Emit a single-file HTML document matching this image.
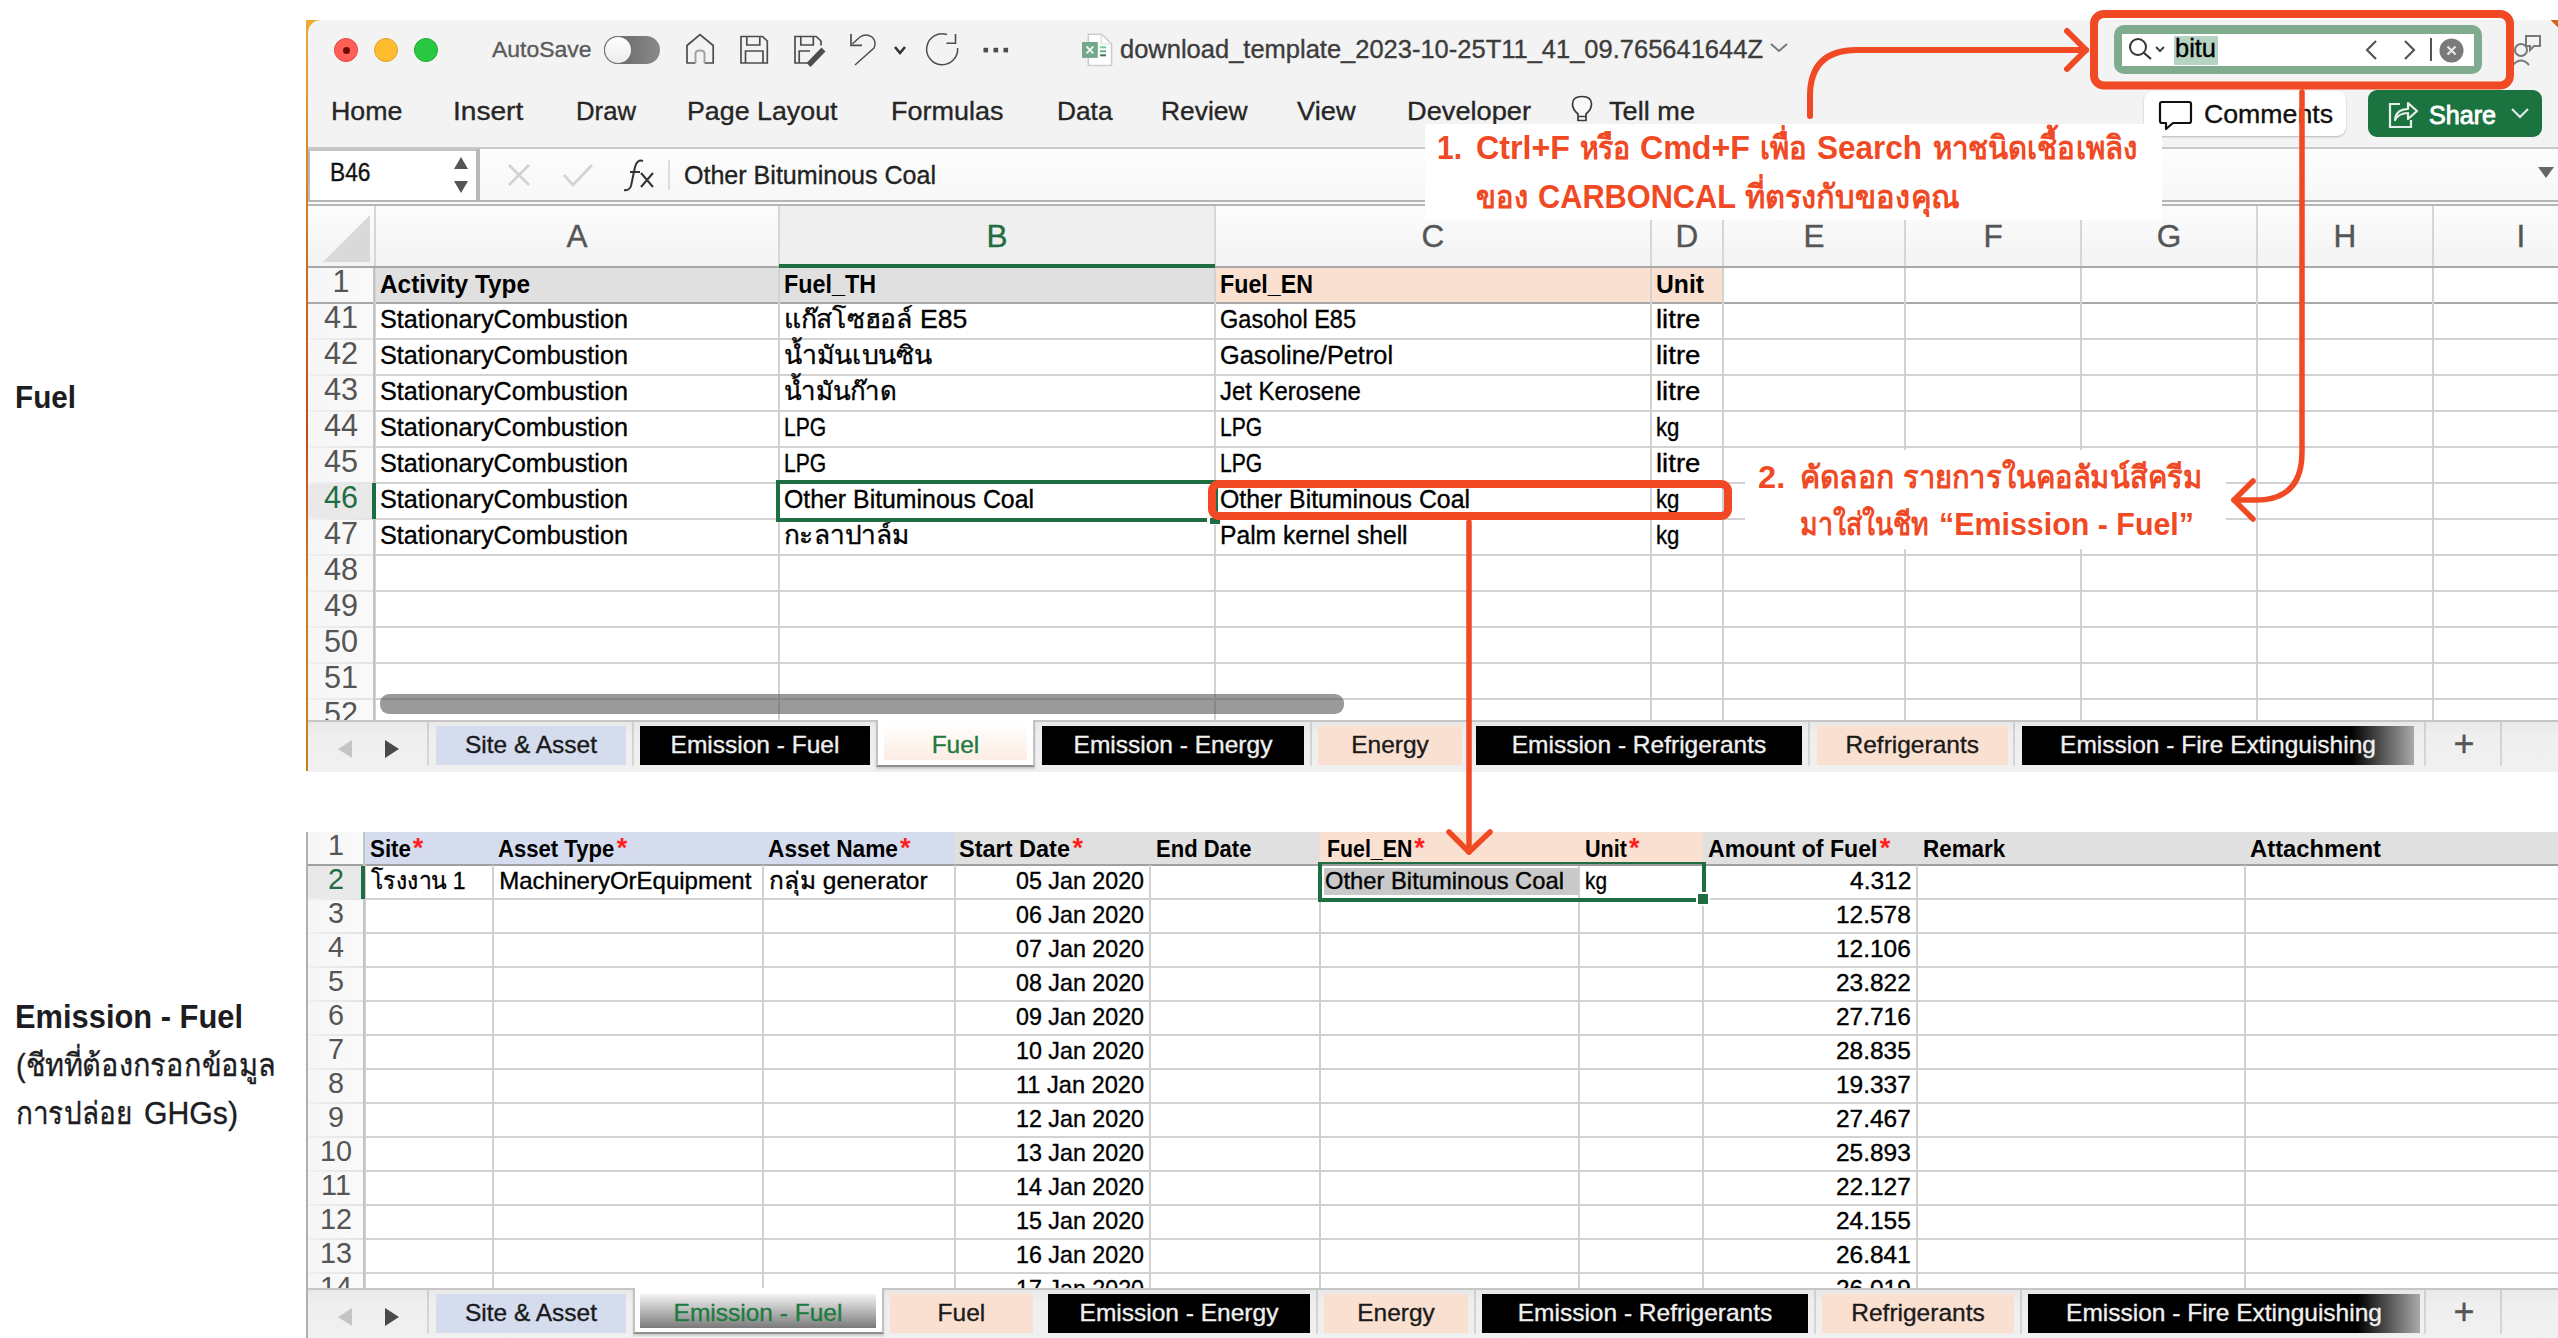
<!DOCTYPE html>
<html><head><meta charset="utf-8"><title>Excel fuel template</title>
<style>
html,body{margin:0;padding:0}
body{width:2558px;height:1338px;position:relative;overflow:hidden;background:#fff;font-family:'Liberation Sans', sans-serif}
</style></head><body>
<div style="position:absolute;left:15.00px;top:381.30px;font-size:32px;line-height:1;font-weight:bold;color:#1d1d1f;white-space:pre;transform:scaleX(0.9273);transform-origin:0 0;">Fuel</div>
<div style="position:absolute;left:15.00px;top:1000.45px;font-size:33px;line-height:1;font-weight:bold;color:#1d1d1f;white-space:pre;transform:scaleX(0.9349);transform-origin:0 0;">Emission - Fuel</div>
<div style="position:absolute;left:15.80px;top:1050.05px;font-size:31px;line-height:1;font-weight:normal;color:#1d1d1f;white-space:pre;transform:scaleX(0.9313);transform-origin:0 0;-webkit-text-stroke:0.35px #1d1d1f;width:281.3px;overflow-x:clip;overflow-y:visible;">(ชีทที่ต้องกรอกข้อมูล</div>
<div style="position:absolute;left:15.80px;top:1097.85px;font-size:31px;line-height:1;font-weight:normal;color:#1d1d1f;white-space:pre;transform:scaleX(0.8992);transform-origin:0 0;-webkit-text-stroke:0.35px #1d1d1f;width:132.0px;overflow-x:clip;overflow-y:visible;">การปล่อย</div>
<div style="position:absolute;left:144.00px;top:1097.85px;font-size:31px;line-height:1;font-weight:normal;color:#1d1d1f;white-space:pre;transform:scaleX(0.9747);transform-origin:0 0;-webkit-text-stroke:0.35px #1d1d1f;">GHGs)</div>
<div style="position:absolute;left:306px;top:20px;width:16px;height:751px;background:linear-gradient(#eeaa33,#c8621c 40%,#c44a1a 55%,#cf7a22 75%,#c8801e)"></div>
<div style="position:absolute;left:308px;top:20px;width:2250px;height:128px;background:#f3f3f3;border-top-left-radius:13px"></div>
<div style="position:absolute;left:2550px;top:20px;width:8px;height:8px;background:linear-gradient(225deg,#d8641e 50%,transparent 50%)"></div>
<div style="position:absolute;left:334px;top:38px;width:24px;height:24px;background:#ff5f57;border-radius:50%;box-sizing:border-box;border:1px solid #e2463f"></div>
<div style="position:absolute;left:374px;top:38px;width:24px;height:24px;background:#febc2e;border-radius:50%;box-sizing:border-box;border:1px solid #e0a028"></div>
<div style="position:absolute;left:414px;top:38px;width:24px;height:24px;background:#28c840;border-radius:50%;box-sizing:border-box;border:1px solid #1fa834"></div>
<div style="position:absolute;left:342.5px;top:46.5px;width:7px;height:7px;background:#6e0a08;border-radius:50%"></div>
<div style="position:absolute;left:492.00px;top:38.31px;font-size:22.7px;line-height:1;font-weight:normal;color:#5a5a5a;white-space:pre;transform:scaleX(1.0113);transform-origin:0 0;-webkit-text-stroke:0.35px #5a5a5a;">AutoSave</div>
<div style="position:absolute;left:604px;top:36px;width:56px;height:28px;background:linear-gradient(90deg,#5f5f5f,#8a8a8a);border-radius:14px"></div>
<div style="position:absolute;left:605px;top:37px;width:26px;height:26px;background:linear-gradient(#fff,#ececec);border-radius:50%;box-shadow:0 0 0 1px #777"></div>
<svg style="position:absolute;left:0px;top:0px;" width="1100" height="80" viewBox="0 0 1100 80">
<g fill="none" stroke="#4d4d4d" stroke-width="1.7" stroke-linejoin="miter">
<path d="M695.5 63 H687 V45.5 L700 34.5 L713.2 45.5 V63 H704.5"/>
<path d="M695.5 63 V53.5 Q695.5 50.5 700 50.5 Q704.5 50.5 704.5 53.5 V63" stroke="#a0a0a0" stroke-width="1.9"/>
<path d="M741 36.5 H762.5 L767.3 41 V63 H741 Z"/>
<path d="M746.8 36.5 V45 H759.8 V36.5"/>
<path d="M745.5 63 V51 H763 V63"/>
<path d="M808 63 H795 V36.5 H816.2 L821 41 V45.5"/>
<path d="M800.8 36.5 V45 H813.3 V36.5"/>
<path d="M799.2 63 V51 H810"/>
<path d="M851 34 V45.4 H862"/>
<path d="M852.5 43.8 L860 37 Q866 33 872 37 Q877 42 874 48 L855 65" stroke-width="1.5"/>
<path d="M947 34.5 A15.5 15.5 0 1 0 957.6 48" stroke-width="1.5"/>
<path d="M955.5 34 V43.3 H946.4" stroke-width="1.6"/>
</g>
<path d="M808.5 65 L823.5 49.5" stroke="#4d4d4d" stroke-width="5.5"/>
<path d="M895 47 L900 53 L905 47" fill="none" stroke="#333" stroke-width="2.6"/>
<rect x="983.5" y="47.8" width="4.6" height="4.6" fill="#4d4d4d"/>
<rect x="993.5" y="47.8" width="4.6" height="4.6" fill="#4d4d4d"/>
<rect x="1003.5" y="47.8" width="4.6" height="4.6" fill="#4d4d4d"/>
</svg>
<svg style="position:absolute;left:1078px;top:30px;" width="40" height="40" viewBox="0 0 40 40"><path d="M10.3 4.2 H23.8 L33.5 14 V35.5 H10.3 Z" fill="#fff" stroke="#cdcdcd" stroke-width="1.6"/><path d="M23.3 5 V14 H33" fill="none" stroke="#dedede" stroke-width="1.2"/><rect x="4" y="12" width="15.8" height="15.9" fill="#72a98a"/><path d="M8.5 16.5 L15.3 23.3 M15.3 16.5 L8.5 23.3" stroke="#eef5f0" stroke-width="1.8"/><rect x="22" y="16.3" width="6" height="2" fill="#6fcf9a"/><rect x="22" y="20.3" width="6" height="2" fill="#5fae82"/><rect x="22" y="24.3" width="6" height="2" fill="#4e6e5c"/></svg>
<div style="position:absolute;left:1120.00px;top:36.55px;font-size:25px;line-height:1;font-weight:normal;color:#3c3c3c;white-space:pre;transform:scaleX(1.0196);transform-origin:0 0;-webkit-text-stroke:0.35px #3c3c3c;">download_template_2023-10-25T11_41_09.765641644Z</div>
<svg style="position:absolute;left:1769px;top:42px;" width="20" height="12" viewBox="0 0 20 12"><path d="M2 2 L10 9 L18 2" fill="none" stroke="#777" stroke-width="2"/></svg>
<div style="position:absolute;left:2114px;top:25px;width:368px;height:49px;background:#80ab8f;border-radius:10px"></div>
<div style="position:absolute;left:2122px;top:34px;width:352px;height:32px;background:#fff"></div>
<svg style="position:absolute;left:2127px;top:36px;" width="46" height="26" viewBox="0 0 46 26"><circle cx="11" cy="11" r="8" fill="none" stroke="#333" stroke-width="2"/><path d="M17 17 L24 23" stroke="#333" stroke-width="2.2"/><path d="M29 11 L33 15 L37 11" fill="none" stroke="#444" stroke-width="2"/></svg>
<div style="position:absolute;left:2174px;top:36px;width:44px;height:29px;background:#b4d3c0"></div>
<div style="position:absolute;left:2175.00px;top:35.72px;font-size:25.5px;line-height:1;font-weight:normal;color:#000;white-space:pre;transform:scaleX(0.9970);transform-origin:0 0;-webkit-text-stroke:0.35px #000;">bitu</div>
<svg style="position:absolute;left:2362px;top:38px;" width="58" height="24" viewBox="0 0 58 24"><path d="M14 3 L5 12 L14 21 M43 3 L52 12 L43 21" fill="none" stroke="#555" stroke-width="2.2"/></svg>
<div style="position:absolute;left:2430px;top:38px;width:2px;height:23px;background:#555"></div>
<svg style="position:absolute;left:2439px;top:38px;" width="25" height="25" viewBox="0 0 25 25"><circle cx="12.5" cy="12.5" r="12" fill="#7a7a7a"/><path d="M8.5 8.5 L16.5 16.5 M16.5 8.5 L8.5 16.5" stroke="#e8e8e8" stroke-width="2.2"/></svg>
<svg style="position:absolute;left:2512px;top:32px;" width="30" height="36" viewBox="0 0 30 36"><circle cx="9" cy="18" r="6" fill="none" stroke="#777" stroke-width="2"/><path d="M1 33 Q9 24 17 33" fill="none" stroke="#777" stroke-width="2"/><path d="M14 4 H28 V14 H22 L18 18 V14 H14 Z" fill="none" stroke="#777" stroke-width="2"/></svg>
<div style="position:absolute;left:331.00px;top:97.60px;font-size:26px;line-height:1;font-weight:normal;color:#262626;white-space:pre;transform:scaleX(1.0294);transform-origin:0 0;-webkit-text-stroke:0.35px #262626;">Home</div>
<div style="position:absolute;left:452.50px;top:97.60px;font-size:26px;line-height:1;font-weight:normal;color:#262626;white-space:pre;transform:scaleX(1.0810);transform-origin:0 0;-webkit-text-stroke:0.35px #262626;">Insert</div>
<div style="position:absolute;left:576.00px;top:97.60px;font-size:26px;line-height:1;font-weight:normal;color:#262626;white-space:pre;transform:scaleX(0.9889);transform-origin:0 0;-webkit-text-stroke:0.35px #262626;">Draw</div>
<div style="position:absolute;left:687.00px;top:97.60px;font-size:26px;line-height:1;font-weight:normal;color:#262626;white-space:pre;transform:scaleX(1.0307);transform-origin:0 0;-webkit-text-stroke:0.35px #262626;">Page Layout</div>
<div style="position:absolute;left:890.60px;top:97.60px;font-size:26px;line-height:1;font-weight:normal;color:#262626;white-space:pre;transform:scaleX(1.0373);transform-origin:0 0;-webkit-text-stroke:0.35px #262626;">Formulas</div>
<div style="position:absolute;left:1057.00px;top:97.60px;font-size:26px;line-height:1;font-weight:normal;color:#262626;white-space:pre;transform:scaleX(1.0105);transform-origin:0 0;-webkit-text-stroke:0.35px #262626;">Data</div>
<div style="position:absolute;left:1161.00px;top:97.60px;font-size:26px;line-height:1;font-weight:normal;color:#262626;white-space:pre;transform:scaleX(1.0147);transform-origin:0 0;-webkit-text-stroke:0.35px #262626;">Review</div>
<div style="position:absolute;left:1297.00px;top:97.60px;font-size:26px;line-height:1;font-weight:normal;color:#262626;white-space:pre;transform:scaleX(1.0485);transform-origin:0 0;-webkit-text-stroke:0.35px #262626;">View</div>
<div style="position:absolute;left:1407.00px;top:97.60px;font-size:26px;line-height:1;font-weight:normal;color:#262626;white-space:pre;transform:scaleX(1.0463);transform-origin:0 0;-webkit-text-stroke:0.35px #262626;">Developer</div>
<div style="position:absolute;left:1609.00px;top:97.60px;font-size:26px;line-height:1;font-weight:normal;color:#262626;white-space:pre;transform:scaleX(1.0442);transform-origin:0 0;-webkit-text-stroke:0.35px #262626;">Tell me</div>
<svg style="position:absolute;left:1560px;top:90px;" width="40" height="40" viewBox="0 0 40 40"><path d="M18 30.5 V24 Q12.5 19.5 12.5 14 Q12.5 6.5 22 6.5 Q31.5 6.5 31.5 14 Q31.5 19.5 26 24 V30.5 Z" fill="#fafafa" stroke="#3a3a3a" stroke-width="1.7"/><path d="M18 26.5 H26" stroke="#3a3a3a" stroke-width="1.5"/></svg>
<div style="position:absolute;left:2144px;top:91px;width:202px;height:45px;background:#fff;border-radius:9px;box-shadow:0 1px 2px rgba(0,0,0,.25)"></div>
<svg style="position:absolute;left:2158px;top:99px;" width="36" height="32" viewBox="0 0 36 32"><path d="M4 3 H31 Q33 3 33 5 V22 Q33 24 31 24 H15 L8 30 V24 H4 Q2 24 2 22 V5 Q2 3 4 3 Z" fill="none" stroke="#111" stroke-width="2.2" stroke-linejoin="round"/></svg>
<div style="position:absolute;left:2204.00px;top:101.92px;font-size:25.5px;line-height:1;font-weight:normal;color:#111;white-space:pre;transform:scaleX(1.0464);transform-origin:0 0;-webkit-text-stroke:0.35px #111;">Comments</div>
<div style="position:absolute;left:2368px;top:90px;width:174px;height:47px;background:#1b7340;border-radius:9px"></div>
<svg style="position:absolute;left:2386px;top:98px;" width="34" height="32" viewBox="0 0 34 32"><path d="M14 6 H4 V29 H25 V22" fill="none" stroke="#e6efe9" stroke-width="2.2"/><path d="M9 22 Q10 11 22 11 V5 L31 13 L22 21 V15 Q13 15 9 22 Z" fill="none" stroke="#e6efe9" stroke-width="2.2" stroke-linejoin="round"/></svg>
<div style="position:absolute;left:2429.00px;top:101.50px;font-size:26px;line-height:1;font-weight:normal;color:#fff;white-space:pre;transform:scaleX(0.9655);transform-origin:0 0;-webkit-text-stroke:0.9px #fff;">Share</div>
<svg style="position:absolute;left:2510px;top:106px;" width="20" height="14" viewBox="0 0 20 14"><path d="M2 3 L10 11 L18 3" fill="none" stroke="#e6efe9" stroke-width="2"/></svg>
<div style="position:absolute;left:308px;top:147px;width:2250px;height:2px;background:#c9c9c9"></div>
<div style="position:absolute;left:308px;top:149px;width:2250px;height:52px;background:linear-gradient(#fdfdfd,#f7f7f7)"></div>
<div style="position:absolute;left:308px;top:149px;width:170px;height:51px;background:#fff;box-sizing:border-box;border-left:2px solid #b8b8b8;border-top:2px solid #c4c4c4"></div>
<div style="position:absolute;left:476px;top:149px;width:4px;height:52px;background:#b9b9b9"></div>
<div style="position:absolute;left:308px;top:200px;width:2250px;height:2px;background:#b5b5b5"></div>
<div style="position:absolute;left:308px;top:202px;width:2250px;height:2px;background:#fafafa"></div>
<div style="position:absolute;left:308px;top:204px;width:2250px;height:2px;background:#b5b5b5"></div>
<div style="position:absolute;left:329.50px;top:160.06px;font-size:25.7px;line-height:1;font-weight:normal;color:#111;white-space:pre;transform:scaleX(0.8859);transform-origin:0 0;-webkit-text-stroke:0.35px #111;">B46</div>
<svg style="position:absolute;left:452px;top:155px;" width="18" height="40" viewBox="0 0 18 40"><path d="M2 14 L9 2 L16 14 Z M2 26 L9 38 L16 26 Z" fill="#555"/></svg>
<svg style="position:absolute;left:506px;top:162px;" width="26" height="26" viewBox="0 0 26 26"><path d="M3 3 L23 23 M23 3 L3 23" stroke="#d2d2d2" stroke-width="2.6"/></svg>
<svg style="position:absolute;left:562px;top:162px;" width="32" height="26" viewBox="0 0 32 26"><path d="M2 13 L11 23 L30 3" fill="none" stroke="#d2d2d2" stroke-width="2.6"/></svg>
<svg style="position:absolute;left:622px;top:158px;" width="36" height="34" viewBox="0 0 36 34"><path d="M21 3 Q15 1 13 9 L9 28 Q7 33 2 32 M8 14 H18" fill="none" stroke="#333" stroke-width="2"/><path d="M19 15 L31 29 M31 15 L19 29" stroke="#333" stroke-width="2"/></svg>
<div style="position:absolute;left:668px;top:160px;width:2px;height:30px;background:#dcdcdc"></div>
<div style="position:absolute;left:684.00px;top:161.90px;font-size:26px;line-height:1;font-weight:normal;color:#222;white-space:pre;transform:scaleX(0.9634);transform-origin:0 0;-webkit-text-stroke:0.35px #222;">Other Bituminous Coal</div>
<svg style="position:absolute;left:2536px;top:164px;" width="20" height="16" viewBox="0 0 20 16"><path d="M2 3 H18 L10 14 Z" fill="#666"/></svg>
<div style="position:absolute;left:308px;top:206px;width:2250px;height:61px;background:linear-gradient(#fcfcfc,#f3f3f3)"></div>
<div style="position:absolute;left:779px;top:206px;width:436px;height:58px;background:#efefef"></div>
<div style="position:absolute;left:374px;top:206px;width:2px;height:61px;background:#d6d6d6"></div>
<div style="position:absolute;left:778px;top:206px;width:2px;height:61px;background:#d6d6d6"></div>
<div style="position:absolute;left:1214px;top:206px;width:2px;height:61px;background:#d6d6d6"></div>
<div style="position:absolute;left:1650px;top:206px;width:2px;height:61px;background:#d6d6d6"></div>
<div style="position:absolute;left:1722px;top:206px;width:2px;height:61px;background:#d6d6d6"></div>
<div style="position:absolute;left:1904px;top:206px;width:2px;height:61px;background:#d6d6d6"></div>
<div style="position:absolute;left:2080px;top:206px;width:2px;height:61px;background:#d6d6d6"></div>
<div style="position:absolute;left:2256px;top:206px;width:2px;height:61px;background:#d6d6d6"></div>
<div style="position:absolute;left:2432px;top:206px;width:2px;height:61px;background:#d6d6d6"></div>
<svg style="position:absolute;left:320px;top:212px;" width="54" height="52" viewBox="0 0 54 52"><path d="M3 50 L50 3 V50 Z" fill="#d9d9d9"/></svg>
<div style="position:absolute;left:566.49px;top:221.22px;font-size:31.5px;line-height:1;font-weight:normal;color:#555;white-space:pre;-webkit-text-stroke:0.35px #555;">A</div>
<div style="position:absolute;left:986.49px;top:221.22px;font-size:31.5px;line-height:1;font-weight:normal;color:#1f6e43;white-space:pre;-webkit-text-stroke:0.35px #1f6e43;">B</div>
<div style="position:absolute;left:1421.62px;top:221.22px;font-size:31.5px;line-height:1;font-weight:normal;color:#555;white-space:pre;-webkit-text-stroke:0.35px #555;">C</div>
<div style="position:absolute;left:1675.62px;top:221.22px;font-size:31.5px;line-height:1;font-weight:normal;color:#555;white-space:pre;-webkit-text-stroke:0.35px #555;">D</div>
<div style="position:absolute;left:1803.49px;top:221.22px;font-size:31.5px;line-height:1;font-weight:normal;color:#555;white-space:pre;-webkit-text-stroke:0.35px #555;">E</div>
<div style="position:absolute;left:1983.38px;top:221.22px;font-size:31.5px;line-height:1;font-weight:normal;color:#555;white-space:pre;-webkit-text-stroke:0.35px #555;">F</div>
<div style="position:absolute;left:2156.74px;top:221.22px;font-size:31.5px;line-height:1;font-weight:normal;color:#555;white-space:pre;-webkit-text-stroke:0.35px #555;">G</div>
<div style="position:absolute;left:2333.62px;top:221.22px;font-size:31.5px;line-height:1;font-weight:normal;color:#555;white-space:pre;-webkit-text-stroke:0.35px #555;">H</div>
<div style="position:absolute;left:2516.62px;top:221.22px;font-size:31.5px;line-height:1;font-weight:normal;color:#555;white-space:pre;-webkit-text-stroke:0.35px #555;">I</div>
<div style="position:absolute;left:308px;top:266px;width:2250px;height:2px;background:#a9a9a9"></div>
<div style="position:absolute;left:779px;top:264px;width:436px;height:4px;background:#1f6e43"></div>
<div style="position:absolute;left:308px;top:268px;width:2250px;height:452px;background:#fff"></div>
<div style="position:absolute;left:308px;top:268px;width:67px;height:452px;background:linear-gradient(90deg,#f6f6f6,#fafafa)"></div>
<div style="position:absolute;left:375px;top:268px;width:840px;height:35px;background:#e0e0e0"></div>
<div style="position:absolute;left:1215px;top:268px;width:508px;height:35px;background:#fae0d1"></div>
<div style="position:absolute;left:308px;top:483px;width:67px;height:36px;background:#e9e9e9"></div>
<div style="position:absolute;left:308px;top:302px;width:2250px;height:2px;background:#a8a8a8"></div>
<div style="position:absolute;left:308px;top:338px;width:67px;height:2px;background:linear-gradient(90deg,#f0f0f0,#e2e2e2)"></div>
<div style="position:absolute;left:375px;top:338px;width:2183px;height:2px;background:#d2d2d2"></div>
<div style="position:absolute;left:308px;top:374px;width:67px;height:2px;background:linear-gradient(90deg,#f0f0f0,#e2e2e2)"></div>
<div style="position:absolute;left:375px;top:374px;width:2183px;height:2px;background:#d2d2d2"></div>
<div style="position:absolute;left:308px;top:410px;width:67px;height:2px;background:linear-gradient(90deg,#f0f0f0,#e2e2e2)"></div>
<div style="position:absolute;left:375px;top:410px;width:2183px;height:2px;background:#d2d2d2"></div>
<div style="position:absolute;left:308px;top:446px;width:67px;height:2px;background:linear-gradient(90deg,#f0f0f0,#e2e2e2)"></div>
<div style="position:absolute;left:375px;top:446px;width:2183px;height:2px;background:#d2d2d2"></div>
<div style="position:absolute;left:308px;top:482px;width:67px;height:2px;background:linear-gradient(90deg,#f0f0f0,#e2e2e2)"></div>
<div style="position:absolute;left:375px;top:482px;width:2183px;height:2px;background:#d2d2d2"></div>
<div style="position:absolute;left:308px;top:518px;width:67px;height:2px;background:linear-gradient(90deg,#f0f0f0,#e2e2e2)"></div>
<div style="position:absolute;left:375px;top:518px;width:2183px;height:2px;background:#d2d2d2"></div>
<div style="position:absolute;left:308px;top:554px;width:67px;height:2px;background:linear-gradient(90deg,#f0f0f0,#e2e2e2)"></div>
<div style="position:absolute;left:375px;top:554px;width:2183px;height:2px;background:#d2d2d2"></div>
<div style="position:absolute;left:308px;top:590px;width:67px;height:2px;background:linear-gradient(90deg,#f0f0f0,#e2e2e2)"></div>
<div style="position:absolute;left:375px;top:590px;width:2183px;height:2px;background:#d2d2d2"></div>
<div style="position:absolute;left:308px;top:626px;width:67px;height:2px;background:linear-gradient(90deg,#f0f0f0,#e2e2e2)"></div>
<div style="position:absolute;left:375px;top:626px;width:2183px;height:2px;background:#d2d2d2"></div>
<div style="position:absolute;left:308px;top:662px;width:67px;height:2px;background:linear-gradient(90deg,#f0f0f0,#e2e2e2)"></div>
<div style="position:absolute;left:375px;top:662px;width:2183px;height:2px;background:#d2d2d2"></div>
<div style="position:absolute;left:308px;top:698px;width:67px;height:2px;background:linear-gradient(90deg,#f0f0f0,#e2e2e2)"></div>
<div style="position:absolute;left:375px;top:698px;width:2183px;height:2px;background:#d2d2d2"></div>
<div style="position:absolute;left:374px;top:268px;width:2px;height:452px;background:#d2d2d2"></div>
<div style="position:absolute;left:778px;top:268px;width:2px;height:452px;background:#d2d2d2"></div>
<div style="position:absolute;left:1214px;top:268px;width:2px;height:452px;background:#d2d2d2"></div>
<div style="position:absolute;left:1650px;top:268px;width:2px;height:452px;background:#d2d2d2"></div>
<div style="position:absolute;left:1722px;top:268px;width:2px;height:452px;background:#d2d2d2"></div>
<div style="position:absolute;left:1904px;top:268px;width:2px;height:452px;background:#d2d2d2"></div>
<div style="position:absolute;left:2080px;top:268px;width:2px;height:452px;background:#d2d2d2"></div>
<div style="position:absolute;left:2256px;top:268px;width:2px;height:452px;background:#d2d2d2"></div>
<div style="position:absolute;left:2432px;top:268px;width:2px;height:452px;background:#d2d2d2"></div>
<div style="position:absolute;left:373px;top:268px;width:2px;height:452px;background:#c4c4c4"></div>
<div style="position:absolute;left:332.49px;top:265.89px;font-size:30.6px;line-height:1;font-weight:normal;color:#555;white-space:pre;">1</div>
<div style="position:absolute;left:323.98px;top:301.89px;font-size:30.6px;line-height:1;font-weight:normal;color:#555;white-space:pre;">41</div>
<div style="position:absolute;left:323.98px;top:337.89px;font-size:30.6px;line-height:1;font-weight:normal;color:#555;white-space:pre;">42</div>
<div style="position:absolute;left:323.98px;top:373.89px;font-size:30.6px;line-height:1;font-weight:normal;color:#555;white-space:pre;">43</div>
<div style="position:absolute;left:323.98px;top:409.89px;font-size:30.6px;line-height:1;font-weight:normal;color:#555;white-space:pre;">44</div>
<div style="position:absolute;left:323.98px;top:445.89px;font-size:30.6px;line-height:1;font-weight:normal;color:#555;white-space:pre;">45</div>
<div style="position:absolute;left:323.98px;top:481.89px;font-size:30.6px;line-height:1;font-weight:normal;color:#1f6e43;white-space:pre;">46</div>
<div style="position:absolute;left:323.98px;top:517.89px;font-size:30.6px;line-height:1;font-weight:normal;color:#555;white-space:pre;">47</div>
<div style="position:absolute;left:323.98px;top:553.89px;font-size:30.6px;line-height:1;font-weight:normal;color:#555;white-space:pre;">48</div>
<div style="position:absolute;left:323.98px;top:589.89px;font-size:30.6px;line-height:1;font-weight:normal;color:#555;white-space:pre;">49</div>
<div style="position:absolute;left:323.98px;top:625.89px;font-size:30.6px;line-height:1;font-weight:normal;color:#555;white-space:pre;">50</div>
<div style="position:absolute;left:323.98px;top:661.89px;font-size:30.6px;line-height:1;font-weight:normal;color:#555;white-space:pre;">51</div>
<div style="position:absolute;left:323.98px;top:697.89px;font-size:30.6px;line-height:1;font-weight:normal;color:#555;white-space:pre;">52</div>
<div style="position:absolute;left:372px;top:483px;width:4px;height:36px;background:#1f6e43"></div>
<div style="position:absolute;left:380.00px;top:272.41px;font-size:25.4px;line-height:1;font-weight:bold;color:#000;white-space:pre;transform:scaleX(0.9606);transform-origin:0 0;">Activity Type</div>
<div style="position:absolute;left:784.00px;top:272.41px;font-size:25.4px;line-height:1;font-weight:bold;color:#000;white-space:pre;transform:scaleX(0.9184);transform-origin:0 0;">Fuel_TH</div>
<div style="position:absolute;left:1220.00px;top:272.41px;font-size:25.4px;line-height:1;font-weight:bold;color:#000;white-space:pre;transform:scaleX(0.9154);transform-origin:0 0;">Fuel_EN</div>
<div style="position:absolute;left:1656.00px;top:272.41px;font-size:25.4px;line-height:1;font-weight:bold;color:#000;white-space:pre;transform:scaleX(0.9725);transform-origin:0 0;">Unit</div>
<div style="position:absolute;left:380.00px;top:306.61px;font-size:25.4px;line-height:1;font-weight:normal;color:#000;white-space:pre;transform:scaleX(0.9927);transform-origin:0 0;-webkit-text-stroke:0.35px #000;">StationaryCombustion</div>
<div style="position:absolute;left:784.00px;top:306.61px;font-size:25.4px;line-height:1;font-weight:normal;color:#000;white-space:pre;transform:scaleX(1.0466);transform-origin:0 0;-webkit-text-stroke:0.35px #000;width:178.2px;overflow-x:clip;overflow-y:visible;">แก๊สโซฮอล์ E85</div>
<div style="position:absolute;left:1220.00px;top:306.61px;font-size:25.4px;line-height:1;font-weight:normal;color:#000;white-space:pre;transform:scaleX(0.9264);transform-origin:0 0;-webkit-text-stroke:0.35px #000;">Gasohol E85</div>
<div style="position:absolute;left:1656.00px;top:306.61px;font-size:25.4px;line-height:1;font-weight:normal;color:#000;white-space:pre;transform:scaleX(1.0850);transform-origin:0 0;-webkit-text-stroke:0.35px #000;">litre</div>
<div style="position:absolute;left:380.00px;top:342.61px;font-size:25.4px;line-height:1;font-weight:normal;color:#000;white-space:pre;transform:scaleX(0.9927);transform-origin:0 0;-webkit-text-stroke:0.35px #000;">StationaryCombustion</div>
<div style="position:absolute;left:784.00px;top:342.61px;font-size:25.4px;line-height:1;font-weight:normal;color:#000;white-space:pre;transform:scaleX(1.0496);transform-origin:0 0;-webkit-text-stroke:0.35px #000;width:144.0px;overflow-x:clip;overflow-y:visible;">น้ำมันเบนซิน</div>
<div style="position:absolute;left:1220.00px;top:342.61px;font-size:25.4px;line-height:1;font-weight:normal;color:#000;white-space:pre;transform:scaleX(0.9966);transform-origin:0 0;-webkit-text-stroke:0.35px #000;">Gasoline/Petrol</div>
<div style="position:absolute;left:1656.00px;top:342.61px;font-size:25.4px;line-height:1;font-weight:normal;color:#000;white-space:pre;transform:scaleX(1.0850);transform-origin:0 0;-webkit-text-stroke:0.35px #000;">litre</div>
<div style="position:absolute;left:380.00px;top:378.61px;font-size:25.4px;line-height:1;font-weight:normal;color:#000;white-space:pre;transform:scaleX(0.9927);transform-origin:0 0;-webkit-text-stroke:0.35px #000;">StationaryCombustion</div>
<div style="position:absolute;left:784.00px;top:378.61px;font-size:25.4px;line-height:1;font-weight:normal;color:#000;white-space:pre;transform:scaleX(1.0182);transform-origin:0 0;-webkit-text-stroke:0.35px #000;width:113.0px;overflow-x:clip;overflow-y:visible;">น้ำมันก๊าด</div>
<div style="position:absolute;left:1220.00px;top:378.61px;font-size:25.4px;line-height:1;font-weight:normal;color:#000;white-space:pre;transform:scaleX(0.9404);transform-origin:0 0;-webkit-text-stroke:0.35px #000;">Jet Kerosene</div>
<div style="position:absolute;left:1656.00px;top:378.61px;font-size:25.4px;line-height:1;font-weight:normal;color:#000;white-space:pre;transform:scaleX(1.0850);transform-origin:0 0;-webkit-text-stroke:0.35px #000;">litre</div>
<div style="position:absolute;left:380.00px;top:414.61px;font-size:25.4px;line-height:1;font-weight:normal;color:#000;white-space:pre;transform:scaleX(0.9927);transform-origin:0 0;-webkit-text-stroke:0.35px #000;">StationaryCombustion</div>
<div style="position:absolute;left:784.00px;top:414.61px;font-size:25.4px;line-height:1;font-weight:normal;color:#000;white-space:pre;transform:scaleX(0.8325);transform-origin:0 0;-webkit-text-stroke:0.35px #000;">LPG</div>
<div style="position:absolute;left:1220.00px;top:414.61px;font-size:25.4px;line-height:1;font-weight:normal;color:#000;white-space:pre;transform:scaleX(0.8325);transform-origin:0 0;-webkit-text-stroke:0.35px #000;">LPG</div>
<div style="position:absolute;left:1656.00px;top:414.61px;font-size:25.4px;line-height:1;font-weight:normal;color:#000;white-space:pre;transform:scaleX(0.8759);transform-origin:0 0;-webkit-text-stroke:0.35px #000;">kg</div>
<div style="position:absolute;left:380.00px;top:450.61px;font-size:25.4px;line-height:1;font-weight:normal;color:#000;white-space:pre;transform:scaleX(0.9927);transform-origin:0 0;-webkit-text-stroke:0.35px #000;">StationaryCombustion</div>
<div style="position:absolute;left:784.00px;top:450.61px;font-size:25.4px;line-height:1;font-weight:normal;color:#000;white-space:pre;transform:scaleX(0.8325);transform-origin:0 0;-webkit-text-stroke:0.35px #000;">LPG</div>
<div style="position:absolute;left:1220.00px;top:450.61px;font-size:25.4px;line-height:1;font-weight:normal;color:#000;white-space:pre;transform:scaleX(0.8325);transform-origin:0 0;-webkit-text-stroke:0.35px #000;">LPG</div>
<div style="position:absolute;left:1656.00px;top:450.61px;font-size:25.4px;line-height:1;font-weight:normal;color:#000;white-space:pre;transform:scaleX(1.0850);transform-origin:0 0;-webkit-text-stroke:0.35px #000;">litre</div>
<div style="position:absolute;left:380.00px;top:486.61px;font-size:25.4px;line-height:1;font-weight:normal;color:#000;white-space:pre;transform:scaleX(0.9927);transform-origin:0 0;-webkit-text-stroke:0.35px #000;">StationaryCombustion</div>
<div style="position:absolute;left:784.00px;top:486.61px;font-size:25.4px;line-height:1;font-weight:normal;color:#000;white-space:pre;transform:scaleX(0.9787);transform-origin:0 0;-webkit-text-stroke:0.35px #000;">Other Bituminous Coal</div>
<div style="position:absolute;left:1220.00px;top:486.61px;font-size:25.4px;line-height:1;font-weight:normal;color:#000;white-space:pre;transform:scaleX(0.9787);transform-origin:0 0;-webkit-text-stroke:0.35px #000;">Other Bituminous Coal</div>
<div style="position:absolute;left:1656.00px;top:486.61px;font-size:25.4px;line-height:1;font-weight:normal;color:#000;white-space:pre;transform:scaleX(0.8759);transform-origin:0 0;-webkit-text-stroke:0.35px #000;">kg</div>
<div style="position:absolute;left:380.00px;top:522.61px;font-size:25.4px;line-height:1;font-weight:normal;color:#000;white-space:pre;transform:scaleX(0.9927);transform-origin:0 0;-webkit-text-stroke:0.35px #000;">StationaryCombustion</div>
<div style="position:absolute;left:784.00px;top:522.61px;font-size:25.4px;line-height:1;font-weight:normal;color:#000;white-space:pre;transform:scaleX(1.0328);transform-origin:0 0;-webkit-text-stroke:0.35px #000;width:125.0px;overflow-x:clip;overflow-y:visible;">กะลาปาล์ม</div>
<div style="position:absolute;left:1220.00px;top:522.61px;font-size:25.4px;line-height:1;font-weight:normal;color:#000;white-space:pre;transform:scaleX(0.9703);transform-origin:0 0;-webkit-text-stroke:0.35px #000;">Palm kernel shell</div>
<div style="position:absolute;left:1656.00px;top:522.61px;font-size:25.4px;line-height:1;font-weight:normal;color:#000;white-space:pre;transform:scaleX(0.8759);transform-origin:0 0;-webkit-text-stroke:0.35px #000;">kg</div>
<div style="position:absolute;left:776px;top:480px;width:442px;height:42px;box-sizing:border-box;border:4px solid #1f6e43"></div>
<div style="position:absolute;left:1207px;top:517px;width:14px;height:8px;background:#fff"></div>
<div style="position:absolute;left:1210px;top:518px;width:10px;height:6px;background:#1f6e43"></div>
<div style="position:absolute;left:380px;top:694px;width:964px;height:20px;background:rgba(87,87,87,.6);border-radius:9px"></div>
<div style="position:absolute;left:308px;top:720px;width:2250px;height:52px;background:linear-gradient(#e7e7e7,#efefef 30%,#f0f0f0)"></div>
<div style="position:absolute;left:308px;top:720px;width:2250px;height:2px;background:#c6c6c6"></div>
<svg style="position:absolute;left:336px;top:739px;" width="18" height="20" viewBox="0 0 18 20"><path d="M16 1 L2 10 L16 19 Z" fill="#c4c4c4"/></svg>
<svg style="position:absolute;left:383px;top:739px;" width="18" height="20" viewBox="0 0 18 20"><path d="M2 1 L16 10 L2 19 Z" fill="#4a4a4a"/></svg>
<div style="position:absolute;left:427px;top:722px;width:2px;height:44px;background:linear-gradient(#cfcfcf,#d8d8d8)"></div>
<div style="position:absolute;left:632px;top:722px;width:2px;height:44px;background:linear-gradient(#cfcfcf,#d8d8d8)"></div>
<div style="position:absolute;left:1309.6px;top:722px;width:2px;height:44px;background:linear-gradient(#cfcfcf,#d8d8d8)"></div>
<div style="position:absolute;left:1466.6px;top:722px;width:2px;height:44px;background:linear-gradient(#cfcfcf,#d8d8d8)"></div>
<div style="position:absolute;left:1807.7px;top:722px;width:2px;height:44px;background:linear-gradient(#cfcfcf,#d8d8d8)"></div>
<div style="position:absolute;left:2013.4px;top:722px;width:2px;height:44px;background:linear-gradient(#cfcfcf,#d8d8d8)"></div>
<div style="position:absolute;left:2424px;top:722px;width:2px;height:44px;background:linear-gradient(#cfcfcf,#d8d8d8)"></div>
<div style="position:absolute;left:2500px;top:722px;width:2px;height:44px;background:linear-gradient(#cfcfcf,#d8d8d8)"></div>
<div style="position:absolute;left:436px;top:726px;width:190px;height:39px;background:#d4dcee"></div>
<div style="position:absolute;left:464.95px;top:732.77px;font-size:24.5px;line-height:1;font-weight:normal;color:#1a1a1a;white-space:pre;-webkit-text-stroke:0.35px #1a1a1a;">Site &amp; Asset</div>
<div style="position:absolute;left:640px;top:726px;width:230px;height:39px;background:#000"></div>
<div style="position:absolute;left:670.59px;top:732.77px;font-size:24.5px;line-height:1;font-weight:normal;color:#f0f0f0;white-space:pre;-webkit-text-stroke:0.35px #f0f0f0;">Emission - Fuel</div>
<div style="position:absolute;left:876px;top:720px;width:159px;height:46.5px;box-sizing:border-box;background:#fff;border:2px solid #c2c2c2;border-top:0;border-bottom:2.5px solid #8e8e8e;box-shadow:0 2px 2px rgba(0,0,0,.15)"></div>
<div style="position:absolute;left:884px;top:726px;width:143px;height:34px;background:linear-gradient(#fffdfc,#fcede4)"></div>
<div style="position:absolute;left:931.66px;top:732.77px;font-size:24.5px;line-height:1;font-weight:normal;color:#1e7b3e;white-space:pre;-webkit-text-stroke:0.35px #1e7b3e;">Fuel</div>
<div style="position:absolute;left:1042px;top:726px;width:262px;height:39px;background:#000"></div>
<div style="position:absolute;left:1073.60px;top:732.77px;font-size:24.5px;line-height:1;font-weight:normal;color:#f0f0f0;white-space:pre;-webkit-text-stroke:0.35px #f0f0f0;">Emission - Energy</div>
<div style="position:absolute;left:1318px;top:726px;width:144px;height:39px;background:#fae0d1"></div>
<div style="position:absolute;left:1351.18px;top:732.77px;font-size:24.5px;line-height:1;font-weight:normal;color:#1a1a1a;white-space:pre;-webkit-text-stroke:0.35px #1a1a1a;">Energy</div>
<div style="position:absolute;left:1476px;top:726px;width:326px;height:39px;background:#000"></div>
<div style="position:absolute;left:1511.70px;top:732.77px;font-size:24.5px;line-height:1;font-weight:normal;color:#f0f0f0;white-space:pre;-webkit-text-stroke:0.35px #f0f0f0;">Emission - Refrigerants</div>
<div style="position:absolute;left:1816.5px;top:726px;width:191.5px;height:39px;background:#fae0d1"></div>
<div style="position:absolute;left:1845.52px;top:732.77px;font-size:24.5px;line-height:1;font-weight:normal;color:#1a1a1a;white-space:pre;-webkit-text-stroke:0.35px #1a1a1a;">Refrigerants</div>
<div style="position:absolute;left:2022px;top:726px;width:392px;height:39px;background:linear-gradient(90deg,#000 0,#000 84%,#aaa 100%)"></div>
<div style="position:absolute;left:2060.05px;top:732.77px;font-size:24.5px;line-height:1;font-weight:normal;color:#f0f0f0;white-space:pre;-webkit-text-stroke:0.35px #f0f0f0;">Emission - Fire Extinguishing</div>
<div style="position:absolute;left:2453.48px;top:725.90px;font-size:36px;line-height:1;font-weight:normal;color:#555;white-space:pre;-webkit-text-stroke:0.35px #555;">+</div>
<div style="position:absolute;left:306px;top:832px;width:2px;height:506px;background:#b0b0b0"></div>
<div style="position:absolute;left:308px;top:832px;width:2250px;height:456px;background:#fff"></div>
<div style="position:absolute;left:308px;top:832px;width:57px;height:456px;background:linear-gradient(90deg,#f6f6f6,#fafafa)"></div>
<div style="position:absolute;left:365px;top:832px;width:590px;height:33px;background:#d4dcee"></div>
<div style="position:absolute;left:955px;top:832px;width:365px;height:33px;background:#e0e0e0"></div>
<div style="position:absolute;left:1320px;top:832px;width:383px;height:33px;background:#fae0d1"></div>
<div style="position:absolute;left:1703px;top:832px;width:855px;height:33px;background:#e0e0e0"></div>
<div style="position:absolute;left:308px;top:866px;width:57px;height:33px;background:#e9e9e9"></div>
<div style="position:absolute;left:308px;top:864px;width:2250px;height:2px;background:#a0a0a0"></div>
<div style="position:absolute;left:308px;top:898px;width:57px;height:2px;background:linear-gradient(90deg,#f0f0f0,#e2e2e2)"></div>
<div style="position:absolute;left:365px;top:898px;width:2193px;height:2px;background:#d2d2d2"></div>
<div style="position:absolute;left:308px;top:932px;width:57px;height:2px;background:linear-gradient(90deg,#f0f0f0,#e2e2e2)"></div>
<div style="position:absolute;left:365px;top:932px;width:2193px;height:2px;background:#d2d2d2"></div>
<div style="position:absolute;left:308px;top:966px;width:57px;height:2px;background:linear-gradient(90deg,#f0f0f0,#e2e2e2)"></div>
<div style="position:absolute;left:365px;top:966px;width:2193px;height:2px;background:#d2d2d2"></div>
<div style="position:absolute;left:308px;top:1000px;width:57px;height:2px;background:linear-gradient(90deg,#f0f0f0,#e2e2e2)"></div>
<div style="position:absolute;left:365px;top:1000px;width:2193px;height:2px;background:#d2d2d2"></div>
<div style="position:absolute;left:308px;top:1034px;width:57px;height:2px;background:linear-gradient(90deg,#f0f0f0,#e2e2e2)"></div>
<div style="position:absolute;left:365px;top:1034px;width:2193px;height:2px;background:#d2d2d2"></div>
<div style="position:absolute;left:308px;top:1068px;width:57px;height:2px;background:linear-gradient(90deg,#f0f0f0,#e2e2e2)"></div>
<div style="position:absolute;left:365px;top:1068px;width:2193px;height:2px;background:#d2d2d2"></div>
<div style="position:absolute;left:308px;top:1102px;width:57px;height:2px;background:linear-gradient(90deg,#f0f0f0,#e2e2e2)"></div>
<div style="position:absolute;left:365px;top:1102px;width:2193px;height:2px;background:#d2d2d2"></div>
<div style="position:absolute;left:308px;top:1136px;width:57px;height:2px;background:linear-gradient(90deg,#f0f0f0,#e2e2e2)"></div>
<div style="position:absolute;left:365px;top:1136px;width:2193px;height:2px;background:#d2d2d2"></div>
<div style="position:absolute;left:308px;top:1170px;width:57px;height:2px;background:linear-gradient(90deg,#f0f0f0,#e2e2e2)"></div>
<div style="position:absolute;left:365px;top:1170px;width:2193px;height:2px;background:#d2d2d2"></div>
<div style="position:absolute;left:308px;top:1204px;width:57px;height:2px;background:linear-gradient(90deg,#f0f0f0,#e2e2e2)"></div>
<div style="position:absolute;left:365px;top:1204px;width:2193px;height:2px;background:#d2d2d2"></div>
<div style="position:absolute;left:308px;top:1238px;width:57px;height:2px;background:linear-gradient(90deg,#f0f0f0,#e2e2e2)"></div>
<div style="position:absolute;left:365px;top:1238px;width:2193px;height:2px;background:#d2d2d2"></div>
<div style="position:absolute;left:308px;top:1272px;width:57px;height:2px;background:linear-gradient(90deg,#f0f0f0,#e2e2e2)"></div>
<div style="position:absolute;left:365px;top:1272px;width:2193px;height:2px;background:#d2d2d2"></div>
<div style="position:absolute;left:364px;top:865px;width:2px;height:423px;background:#d2d2d2"></div>
<div style="position:absolute;left:492px;top:865px;width:2px;height:423px;background:#d2d2d2"></div>
<div style="position:absolute;left:762px;top:865px;width:2px;height:423px;background:#d2d2d2"></div>
<div style="position:absolute;left:954px;top:865px;width:2px;height:423px;background:#d2d2d2"></div>
<div style="position:absolute;left:1149px;top:865px;width:2px;height:423px;background:#d2d2d2"></div>
<div style="position:absolute;left:1319px;top:865px;width:2px;height:423px;background:#d2d2d2"></div>
<div style="position:absolute;left:1578px;top:865px;width:2px;height:423px;background:#d2d2d2"></div>
<div style="position:absolute;left:1702px;top:865px;width:2px;height:423px;background:#d2d2d2"></div>
<div style="position:absolute;left:1916px;top:865px;width:2px;height:423px;background:#d2d2d2"></div>
<div style="position:absolute;left:2244px;top:865px;width:2px;height:423px;background:#d2d2d2"></div>
<div style="position:absolute;left:363px;top:832px;width:2px;height:456px;background:#c4c4c4"></div>
<div style="position:absolute;left:361px;top:866px;width:4px;height:33px;background:#1f6e43"></div>
<div style="position:absolute;left:327.99px;top:831.12px;font-size:28.8px;line-height:1;font-weight:normal;color:#555;white-space:pre;">1</div>
<div style="position:absolute;left:327.99px;top:865.12px;font-size:28.8px;line-height:1;font-weight:normal;color:#1f6e43;white-space:pre;">2</div>
<div style="position:absolute;left:327.99px;top:899.12px;font-size:28.8px;line-height:1;font-weight:normal;color:#555;white-space:pre;">3</div>
<div style="position:absolute;left:327.99px;top:933.12px;font-size:28.8px;line-height:1;font-weight:normal;color:#555;white-space:pre;">4</div>
<div style="position:absolute;left:327.99px;top:967.12px;font-size:28.8px;line-height:1;font-weight:normal;color:#555;white-space:pre;">5</div>
<div style="position:absolute;left:327.99px;top:1001.12px;font-size:28.8px;line-height:1;font-weight:normal;color:#555;white-space:pre;">6</div>
<div style="position:absolute;left:327.99px;top:1035.12px;font-size:28.8px;line-height:1;font-weight:normal;color:#555;white-space:pre;">7</div>
<div style="position:absolute;left:327.99px;top:1069.12px;font-size:28.8px;line-height:1;font-weight:normal;color:#555;white-space:pre;">8</div>
<div style="position:absolute;left:327.99px;top:1103.12px;font-size:28.8px;line-height:1;font-weight:normal;color:#555;white-space:pre;">9</div>
<div style="position:absolute;left:319.98px;top:1137.12px;font-size:28.8px;line-height:1;font-weight:normal;color:#555;white-space:pre;">10</div>
<div style="position:absolute;left:321.05px;top:1171.12px;font-size:28.8px;line-height:1;font-weight:normal;color:#555;white-space:pre;">11</div>
<div style="position:absolute;left:319.98px;top:1205.12px;font-size:28.8px;line-height:1;font-weight:normal;color:#555;white-space:pre;">12</div>
<div style="position:absolute;left:319.98px;top:1239.12px;font-size:28.8px;line-height:1;font-weight:normal;color:#555;white-space:pre;">13</div>
<div style="position:absolute;left:319.98px;top:1273.12px;font-size:28.8px;line-height:1;font-weight:normal;color:#555;white-space:pre;">14</div>
<div style="position:absolute;left:369.80px;top:837.40px;font-size:24px;line-height:1;font-weight:bold;color:#000;white-space:pre;transform:scaleX(0.9315);transform-origin:0 0;">Site</div>
<div style="position:absolute;left:412.80px;top:834.55px;font-size:27px;line-height:1;font-weight:bold;color:#ff1f1f;white-space:pre;">*</div>
<div style="position:absolute;left:498.40px;top:837.40px;font-size:24px;line-height:1;font-weight:bold;color:#000;white-space:pre;transform:scaleX(0.9210);transform-origin:0 0;">Asset Type</div>
<div style="position:absolute;left:616.70px;top:834.55px;font-size:27px;line-height:1;font-weight:bold;color:#ff1f1f;white-space:pre;">*</div>
<div style="position:absolute;left:768.00px;top:837.40px;font-size:24px;line-height:1;font-weight:bold;color:#000;white-space:pre;transform:scaleX(0.9461);transform-origin:0 0;">Asset Name</div>
<div style="position:absolute;left:900.00px;top:834.55px;font-size:27px;line-height:1;font-weight:bold;color:#ff1f1f;white-space:pre;">*</div>
<div style="position:absolute;left:959.40px;top:837.40px;font-size:24px;line-height:1;font-weight:bold;color:#000;white-space:pre;transform:scaleX(0.9791);transform-origin:0 0;">Start Date</div>
<div style="position:absolute;left:1072.40px;top:834.55px;font-size:27px;line-height:1;font-weight:bold;color:#ff1f1f;white-space:pre;">*</div>
<div style="position:absolute;left:1156.40px;top:837.40px;font-size:24px;line-height:1;font-weight:bold;color:#000;white-space:pre;transform:scaleX(0.9172);transform-origin:0 0;">End Date</div>
<div style="position:absolute;left:1326.90px;top:837.40px;font-size:24px;line-height:1;font-weight:bold;color:#000;white-space:pre;transform:scaleX(0.8883);transform-origin:0 0;">Fuel_EN</div>
<div style="position:absolute;left:1414.20px;top:834.55px;font-size:27px;line-height:1;font-weight:bold;color:#ff1f1f;white-space:pre;">*</div>
<div style="position:absolute;left:1584.90px;top:837.40px;font-size:24px;line-height:1;font-weight:bold;color:#000;white-space:pre;transform:scaleX(0.9002);transform-origin:0 0;">Unit</div>
<div style="position:absolute;left:1628.90px;top:834.55px;font-size:27px;line-height:1;font-weight:bold;color:#ff1f1f;white-space:pre;">*</div>
<div style="position:absolute;left:1708.40px;top:837.40px;font-size:24px;line-height:1;font-weight:bold;color:#000;white-space:pre;transform:scaleX(0.9627);transform-origin:0 0;">Amount of Fuel</div>
<div style="position:absolute;left:1879.80px;top:834.55px;font-size:27px;line-height:1;font-weight:bold;color:#ff1f1f;white-space:pre;">*</div>
<div style="position:absolute;left:1923.00px;top:837.40px;font-size:24px;line-height:1;font-weight:bold;color:#000;white-space:pre;transform:scaleX(0.9346);transform-origin:0 0;">Remark</div>
<div style="position:absolute;left:2250.00px;top:837.40px;font-size:24px;line-height:1;font-weight:bold;color:#000;white-space:pre;transform:scaleX(0.9923);transform-origin:0 0;">Attachment</div>
<div style="position:absolute;left:1324px;top:868px;width:255px;height:27px;background:#c9c9c9"></div>
<div style="position:absolute;left:371.00px;top:869.30px;font-size:24px;line-height:1;font-weight:normal;color:#000;white-space:pre;transform:scaleX(0.9554);transform-origin:0 0;-webkit-text-stroke:0.35px #000;width:102.0px;overflow-x:clip;overflow-y:visible;">โรงงาน 1</div>
<div style="position:absolute;left:499.20px;top:869.30px;font-size:24px;line-height:1;font-weight:normal;color:#000;white-space:pre;-webkit-text-stroke:0.35px #000;">MachineryOrEquipment</div>
<div style="position:absolute;left:769.40px;top:869.30px;font-size:24px;line-height:1;font-weight:normal;color:#000;white-space:pre;transform:scaleX(1.0206);transform-origin:0 0;-webkit-text-stroke:0.35px #000;width:158.4px;overflow-x:clip;overflow-y:visible;">กลุ่ม generator</div>
<div style="position:absolute;left:1325.30px;top:869.30px;font-size:24px;line-height:1;font-weight:normal;color:#000;white-space:pre;transform:scaleX(0.9898);transform-origin:0 0;-webkit-text-stroke:0.35px #000;">Other Bituminous Coal</div>
<div style="position:absolute;left:1585.00px;top:869.30px;font-size:24px;line-height:1;font-weight:normal;color:#000;white-space:pre;transform:scaleX(0.8675);transform-origin:0 0;-webkit-text-stroke:0.35px #000;">kg</div>
<div style="position:absolute;left:1016.00px;top:869.30px;font-size:24px;line-height:1;font-weight:normal;color:#000;white-space:pre;transform:scaleX(0.9688);transform-origin:0 0;-webkit-text-stroke:0.35px #000;">05 Jan 2020</div>
<div style="position:absolute;left:1849.60px;top:869.30px;font-size:24px;line-height:1;font-weight:normal;color:#000;white-space:pre;transform:scaleX(1.0223);transform-origin:0 0;-webkit-text-stroke:0.35px #000;">4.312</div>
<div style="position:absolute;left:1016.00px;top:903.30px;font-size:24px;line-height:1;font-weight:normal;color:#000;white-space:pre;transform:scaleX(0.9688);transform-origin:0 0;-webkit-text-stroke:0.35px #000;">06 Jan 2020</div>
<div style="position:absolute;left:1836.20px;top:903.30px;font-size:24px;line-height:1;font-weight:normal;color:#000;white-space:pre;transform:scaleX(1.0190);transform-origin:0 0;-webkit-text-stroke:0.35px #000;">12.578</div>
<div style="position:absolute;left:1016.00px;top:937.30px;font-size:24px;line-height:1;font-weight:normal;color:#000;white-space:pre;transform:scaleX(0.9688);transform-origin:0 0;-webkit-text-stroke:0.35px #000;">07 Jan 2020</div>
<div style="position:absolute;left:1836.20px;top:937.30px;font-size:24px;line-height:1;font-weight:normal;color:#000;white-space:pre;transform:scaleX(1.0190);transform-origin:0 0;-webkit-text-stroke:0.35px #000;">12.106</div>
<div style="position:absolute;left:1016.00px;top:971.30px;font-size:24px;line-height:1;font-weight:normal;color:#000;white-space:pre;transform:scaleX(0.9688);transform-origin:0 0;-webkit-text-stroke:0.35px #000;">08 Jan 2020</div>
<div style="position:absolute;left:1836.20px;top:971.30px;font-size:24px;line-height:1;font-weight:normal;color:#000;white-space:pre;transform:scaleX(1.0190);transform-origin:0 0;-webkit-text-stroke:0.35px #000;">23.822</div>
<div style="position:absolute;left:1016.00px;top:1005.30px;font-size:24px;line-height:1;font-weight:normal;color:#000;white-space:pre;transform:scaleX(0.9688);transform-origin:0 0;-webkit-text-stroke:0.35px #000;">09 Jan 2020</div>
<div style="position:absolute;left:1836.20px;top:1005.30px;font-size:24px;line-height:1;font-weight:normal;color:#000;white-space:pre;transform:scaleX(1.0190);transform-origin:0 0;-webkit-text-stroke:0.35px #000;">27.716</div>
<div style="position:absolute;left:1016.00px;top:1039.30px;font-size:24px;line-height:1;font-weight:normal;color:#000;white-space:pre;transform:scaleX(0.9688);transform-origin:0 0;-webkit-text-stroke:0.35px #000;">10 Jan 2020</div>
<div style="position:absolute;left:1836.20px;top:1039.30px;font-size:24px;line-height:1;font-weight:normal;color:#000;white-space:pre;transform:scaleX(1.0190);transform-origin:0 0;-webkit-text-stroke:0.35px #000;">28.835</div>
<div style="position:absolute;left:1016.00px;top:1073.30px;font-size:24px;line-height:1;font-weight:normal;color:#000;white-space:pre;transform:scaleX(0.9820);transform-origin:0 0;-webkit-text-stroke:0.35px #000;">11 Jan 2020</div>
<div style="position:absolute;left:1836.20px;top:1073.30px;font-size:24px;line-height:1;font-weight:normal;color:#000;white-space:pre;transform:scaleX(1.0190);transform-origin:0 0;-webkit-text-stroke:0.35px #000;">19.337</div>
<div style="position:absolute;left:1016.00px;top:1107.30px;font-size:24px;line-height:1;font-weight:normal;color:#000;white-space:pre;transform:scaleX(0.9688);transform-origin:0 0;-webkit-text-stroke:0.35px #000;">12 Jan 2020</div>
<div style="position:absolute;left:1836.20px;top:1107.30px;font-size:24px;line-height:1;font-weight:normal;color:#000;white-space:pre;transform:scaleX(1.0190);transform-origin:0 0;-webkit-text-stroke:0.35px #000;">27.467</div>
<div style="position:absolute;left:1016.00px;top:1141.30px;font-size:24px;line-height:1;font-weight:normal;color:#000;white-space:pre;transform:scaleX(0.9688);transform-origin:0 0;-webkit-text-stroke:0.35px #000;">13 Jan 2020</div>
<div style="position:absolute;left:1836.20px;top:1141.30px;font-size:24px;line-height:1;font-weight:normal;color:#000;white-space:pre;transform:scaleX(1.0190);transform-origin:0 0;-webkit-text-stroke:0.35px #000;">25.893</div>
<div style="position:absolute;left:1016.00px;top:1175.30px;font-size:24px;line-height:1;font-weight:normal;color:#000;white-space:pre;transform:scaleX(0.9688);transform-origin:0 0;-webkit-text-stroke:0.35px #000;">14 Jan 2020</div>
<div style="position:absolute;left:1836.20px;top:1175.30px;font-size:24px;line-height:1;font-weight:normal;color:#000;white-space:pre;transform:scaleX(1.0190);transform-origin:0 0;-webkit-text-stroke:0.35px #000;">22.127</div>
<div style="position:absolute;left:1016.00px;top:1209.30px;font-size:24px;line-height:1;font-weight:normal;color:#000;white-space:pre;transform:scaleX(0.9688);transform-origin:0 0;-webkit-text-stroke:0.35px #000;">15 Jan 2020</div>
<div style="position:absolute;left:1836.20px;top:1209.30px;font-size:24px;line-height:1;font-weight:normal;color:#000;white-space:pre;transform:scaleX(1.0190);transform-origin:0 0;-webkit-text-stroke:0.35px #000;">24.155</div>
<div style="position:absolute;left:1016.00px;top:1243.30px;font-size:24px;line-height:1;font-weight:normal;color:#000;white-space:pre;transform:scaleX(0.9688);transform-origin:0 0;-webkit-text-stroke:0.35px #000;">16 Jan 2020</div>
<div style="position:absolute;left:1836.20px;top:1243.30px;font-size:24px;line-height:1;font-weight:normal;color:#000;white-space:pre;transform:scaleX(1.0190);transform-origin:0 0;-webkit-text-stroke:0.35px #000;">26.841</div>
<div style="position:absolute;left:1016.00px;top:1277.30px;font-size:24px;line-height:1;font-weight:normal;color:#000;white-space:pre;transform:scaleX(0.9688);transform-origin:0 0;-webkit-text-stroke:0.35px #000;">17 Jan 2020</div>
<div style="position:absolute;left:1836.20px;top:1277.30px;font-size:24px;line-height:1;font-weight:normal;color:#000;white-space:pre;transform:scaleX(1.0190);transform-origin:0 0;-webkit-text-stroke:0.35px #000;">26.019</div>
<div style="position:absolute;left:1318px;top:862px;width:388px;height:40px;box-sizing:border-box;border:4px solid #1f6e43;border-top-width:2px"></div>
<div style="position:absolute;left:1322px;top:864px;width:380px;height:2px;background:#9a9a9a"></div>
<div style="position:absolute;left:1696px;top:892px;width:14px;height:14px;background:#fff"></div>
<div style="position:absolute;left:1698px;top:894.2px;width:10px;height:9.6px;background:#1f6e43"></div>
<div style="position:absolute;left:308px;top:1288px;width:2250px;height:52px;background:linear-gradient(#e7e7e7,#efefef 30%,#f0f0f0)"></div>
<div style="position:absolute;left:308px;top:1288px;width:2250px;height:2px;background:#c6c6c6"></div>
<svg style="position:absolute;left:336px;top:1307px;" width="18" height="20" viewBox="0 0 18 20"><path d="M16 1 L2 10 L16 19 Z" fill="#c4c4c4"/></svg>
<svg style="position:absolute;left:383px;top:1307px;" width="18" height="20" viewBox="0 0 18 20"><path d="M2 1 L16 10 L2 19 Z" fill="#4a4a4a"/></svg>
<div style="position:absolute;left:427px;top:1290px;width:2px;height:44px;background:linear-gradient(#cfcfcf,#d8d8d8)"></div>
<div style="position:absolute;left:2424px;top:1290px;width:2px;height:44px;background:linear-gradient(#cfcfcf,#d8d8d8)"></div>
<div style="position:absolute;left:2500px;top:1290px;width:2px;height:44px;background:linear-gradient(#cfcfcf,#d8d8d8)"></div>
<div style="position:absolute;left:1315.8px;top:1290px;width:2px;height:44px;background:linear-gradient(#cfcfcf,#d8d8d8)"></div>
<div style="position:absolute;left:1473.7px;top:1290px;width:2px;height:44px;background:linear-gradient(#cfcfcf,#d8d8d8)"></div>
<div style="position:absolute;left:1814px;top:1290px;width:2px;height:44px;background:linear-gradient(#cfcfcf,#d8d8d8)"></div>
<div style="position:absolute;left:2019.7px;top:1290px;width:2px;height:44px;background:linear-gradient(#cfcfcf,#d8d8d8)"></div>
<div style="position:absolute;left:436px;top:1294px;width:190px;height:39px;background:#d4dcee"></div>
<div style="position:absolute;left:464.95px;top:1300.77px;font-size:24.5px;line-height:1;font-weight:normal;color:#1a1a1a;white-space:pre;-webkit-text-stroke:0.35px #1a1a1a;">Site &amp; Asset</div>
<div style="position:absolute;left:633px;top:1288px;width:251px;height:46px;box-sizing:border-box;background:#fff;border:2px solid #c2c2c2;border-top:0;border-bottom:2.5px solid #8e8e8e;box-shadow:0 2px 2px rgba(0,0,0,.15)"></div>
<div style="position:absolute;left:640px;top:1294px;width:236px;height:34px;background:linear-gradient(#f2f2f2,#c4c4c4 40%,#7a7a7a)"></div>
<div style="position:absolute;left:673.59px;top:1300.77px;font-size:24.5px;line-height:1;font-weight:normal;color:#1e7b3e;white-space:pre;-webkit-text-stroke:0.35px #1e7b3e;">Emission - Fuel</div>
<div style="position:absolute;left:889.5px;top:1294px;width:143.9000000000001px;height:39px;background:#fae0d1"></div>
<div style="position:absolute;left:937.61px;top:1300.77px;font-size:24.5px;line-height:1;font-weight:normal;color:#1a1a1a;white-space:pre;-webkit-text-stroke:0.35px #1a1a1a;">Fuel</div>
<div style="position:absolute;left:1048px;top:1294px;width:262px;height:39px;background:#000"></div>
<div style="position:absolute;left:1079.60px;top:1300.77px;font-size:24.5px;line-height:1;font-weight:normal;color:#f0f0f0;white-space:pre;-webkit-text-stroke:0.35px #f0f0f0;">Emission - Energy</div>
<div style="position:absolute;left:1324px;top:1294px;width:144px;height:39px;background:#fae0d1"></div>
<div style="position:absolute;left:1357.18px;top:1300.77px;font-size:24.5px;line-height:1;font-weight:normal;color:#1a1a1a;white-space:pre;-webkit-text-stroke:0.35px #1a1a1a;">Energy</div>
<div style="position:absolute;left:1482px;top:1294px;width:326px;height:39px;background:#000"></div>
<div style="position:absolute;left:1517.70px;top:1300.77px;font-size:24.5px;line-height:1;font-weight:normal;color:#f0f0f0;white-space:pre;-webkit-text-stroke:0.35px #f0f0f0;">Emission - Refrigerants</div>
<div style="position:absolute;left:1822px;top:1294px;width:192px;height:39px;background:#fae0d1"></div>
<div style="position:absolute;left:1851.27px;top:1300.77px;font-size:24.5px;line-height:1;font-weight:normal;color:#1a1a1a;white-space:pre;-webkit-text-stroke:0.35px #1a1a1a;">Refrigerants</div>
<div style="position:absolute;left:2028px;top:1294px;width:392px;height:39px;background:linear-gradient(90deg,#000 0,#000 84%,#aaa 100%)"></div>
<div style="position:absolute;left:2066.05px;top:1300.77px;font-size:24.5px;line-height:1;font-weight:normal;color:#f0f0f0;white-space:pre;-webkit-text-stroke:0.35px #f0f0f0;">Emission - Fire Extinguishing</div>
<div style="position:absolute;left:2453.48px;top:1293.90px;font-size:36px;line-height:1;font-weight:normal;color:#555;white-space:pre;-webkit-text-stroke:0.35px #555;">+</div>
<svg style="position:absolute;left:0;top:0" width="2558" height="1338" viewBox="0 0 2558 1338">
<rect x="2094" y="14" width="416" height="71.5" rx="10" fill="none" stroke="#f04923" stroke-width="8"/>
<rect x="1212" y="484" width="516" height="32" rx="7" fill="none" stroke="#f04923" stroke-width="8"/>
<g fill="none" stroke="#f04923" stroke-linecap="round" stroke-linejoin="round">
<path d="M1810 116 V96 Q1810 50 1857 50 H2086" stroke-width="6"/>
<path d="M2067 31 L2086 50 L2067 69" stroke-width="6"/>
<path d="M2302 92 V452 Q2302 500 2256 500 H2234" stroke-width="5.5"/>
<path d="M2253 481 L2234 500 L2253 519" stroke-width="5.5"/>
<path d="M1469 522 V852" stroke-width="5.5"/>
<path d="M1449 832 L1469 852 L1490 832" stroke-width="5.5"/>
</g></svg>
<div style="position:absolute;left:1425px;top:124px;width:737px;height:96px;background:#fff"></div>
<div style="position:absolute;left:1436.70px;top:132.38px;font-size:32.5px;line-height:1;font-weight:bold;color:#f04923;white-space:pre;transform:scaleX(0.9222);transform-origin:0 0;">1.</div>
<div style="position:absolute;left:1475.60px;top:132.38px;font-size:32.5px;line-height:1;font-weight:bold;color:#f04923;white-space:pre;transform:scaleX(0.9914);transform-origin:0 0;">Ctrl+F</div>
<div style="position:absolute;left:1580.00px;top:132.38px;font-size:32.5px;line-height:1;font-weight:bold;color:#f04923;white-space:pre;transform:scaleX(0.8793);transform-origin:0 0;width:61.0px;overflow-x:clip;overflow-y:visible;">หรือ</div>
<div style="position:absolute;left:1640.00px;top:132.38px;font-size:32.5px;line-height:1;font-weight:bold;color:#f04923;white-space:pre;transform:scaleX(0.9904);transform-origin:0 0;">Cmd+F</div>
<div style="position:absolute;left:1760.40px;top:132.38px;font-size:32.5px;line-height:1;font-weight:bold;color:#f04923;white-space:pre;transform:scaleX(0.9038);transform-origin:0 0;width:55.0px;overflow-x:clip;overflow-y:visible;">เพื่อ</div>
<div style="position:absolute;left:1817.30px;top:132.38px;font-size:32.5px;line-height:1;font-weight:bold;color:#f04923;white-space:pre;transform:scaleX(0.9686);transform-origin:0 0;">Search</div>
<div style="position:absolute;left:1932.70px;top:132.38px;font-size:32.5px;line-height:1;font-weight:bold;color:#f04923;white-space:pre;transform:scaleX(0.9084);transform-origin:0 0;width:228.0px;overflow-x:clip;overflow-y:visible;">หาชนิดเชื้อเพลิง</div>
<div style="position:absolute;left:1475.60px;top:180.68px;font-size:32.5px;line-height:1;font-weight:bold;color:#f04923;white-space:pre;transform:scaleX(0.8966);transform-origin:0 0;width:61.0px;overflow-x:clip;overflow-y:visible;">ของ</div>
<div style="position:absolute;left:1538.00px;top:180.68px;font-size:32.5px;line-height:1;font-weight:bold;color:#f04923;white-space:pre;transform:scaleX(0.9454);transform-origin:0 0;">CARBONCAL</div>
<div style="position:absolute;left:1745.00px;top:180.68px;font-size:32.5px;line-height:1;font-weight:bold;color:#f04923;white-space:pre;transform:scaleX(0.9513);transform-origin:0 0;width:229.0px;overflow-x:clip;overflow-y:visible;">ที่ตรงกับของคุณ</div>
<div style="position:absolute;left:1745px;top:450px;width:481px;height:99px;background:#fff"></div>
<div style="position:absolute;left:1758.20px;top:461.73px;font-size:31.5px;line-height:1;font-weight:bold;color:#f04923;white-space:pre;transform:scaleX(1.0350);transform-origin:0 0;">2.</div>
<div style="position:absolute;left:1799.50px;top:461.73px;font-size:31.5px;line-height:1;font-weight:bold;color:#f04923;white-space:pre;transform:scaleX(0.9592);transform-origin:0 0;width:101.0px;overflow-x:clip;overflow-y:visible;">คัดลอก</div>
<div style="position:absolute;left:1903.00px;top:461.73px;font-size:31.5px;line-height:1;font-weight:bold;color:#f04923;white-space:pre;transform:scaleX(0.9228);transform-origin:0 0;width:327.0px;overflow-x:clip;overflow-y:visible;">รายการในคอลัมน์สีครีม</div>
<div style="position:absolute;left:1799.50px;top:508.83px;font-size:31.5px;line-height:1;font-weight:bold;color:#f04923;white-space:pre;transform:scaleX(0.8487);transform-origin:0 0;width:155.0px;overflow-x:clip;overflow-y:visible;">มาใส่ในชีท</div>
<div style="position:absolute;left:1938.70px;top:508.83px;font-size:31.5px;line-height:1;font-weight:bold;color:#f04923;white-space:pre;transform:scaleX(0.9648);transform-origin:0 0;">“Emission - Fuel”</div>
</body></html>
